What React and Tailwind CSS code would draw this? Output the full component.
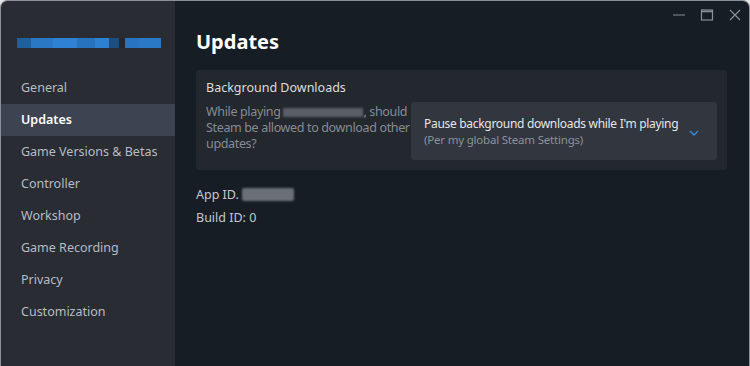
import React from 'react';

const navItems = [
  'General',
  'Updates',
  'Game Versions & Betas',
  'Controller',
  'Workshop',
  'Game Recording',
  'Privacy',
  'Customization',
];

function WindowControls() {
  return (
    <div className="flex items-center gap-[12px] text-[#8b9096]">
      <svg width="16" height="16" viewBox="0 0 16 16">
        <line x1="2" y1="8" x2="14" y2="8" stroke="currentColor" strokeWidth="1.2" />
      </svg>
      <svg width="16" height="16" viewBox="0 0 16 16">
        <rect x="2.5" y="3" width="11" height="10" fill="none" stroke="currentColor" strokeWidth="1.2" />
        <line x1="2.5" y1="4.5" x2="13.5" y2="4.5" stroke="currentColor" strokeWidth="1.5" />
      </svg>
      <svg width="16" height="16" viewBox="0 0 16 16">
        <path d="M3 3 L13 13 M13 3 L3 13" stroke="currentColor" strokeWidth="1.2" />
      </svg>
    </div>
  );
}

function BlurredLogo() {
  // game logo, pixelated / blurred in the screenshot
  return (
    <div className="flex h-[10px] w-[144px] blur-[0.6px]">
      <div className="w-[14px] bg-[#1f5f9c]" />
      <div className="w-[22px] bg-[#2a78c4]" />
      <div className="w-[24px] bg-[#2f82d3]" />
      <div className="w-[18px] bg-[#2873bd]" />
      <div className="w-[14px] bg-[#2e80d0]" />
      <div className="w-[10px] bg-[#1d4e80]" />
      <div className="w-[6px] bg-[#23272e]" />
      <div className="w-[14px] bg-[#2874c0]" />
      <div className="w-[22px] bg-[#2a79c6]" />
    </div>
  );
}

export default function App() {
  return (
    <div
      className="h-[366px] w-[750px] overflow-hidden bg-[#e6e6e6]"
      style={{ fontFamily: '"Noto Sans", "Open Sans", Arial, sans-serif' }}
    >
      <div className="flex h-[367px] overflow-hidden rounded-t-[7px] border border-[#8c9098]">
        {/* Sidebar */}
        <div className="flex w-[174px] shrink-0 flex-col bg-[#292c33]">
          <div className="pl-[16px] pt-[37px]">
            <BlurredLogo />
          </div>
          <nav className="mt-[24px] flex flex-col">
            {navItems.map(item => (
              <div
                key={item}
                className={`flex h-[32px] items-center pl-[20px] text-[12.5px] ${
                  item === 'Updates'
                    ? 'bg-[#3d4350] font-semibold text-white'
                    : 'text-[#b8bcc2]'
                }`}
              >
                {item}
              </div>
            ))}
          </nav>
        </div>

        {/* Main */}
        <div className="flex min-w-0 flex-1 flex-col bg-[#171d25]">
          <div className="flex justify-end pr-[6px] pt-[6px]">
            <WindowControls />
          </div>
          <div className="pl-[21px] pr-[22px]">
            <h1 className="mt-[5px] text-[20px] font-bold leading-[28px] text-white">Updates</h1>

            <div className="mt-[14px] rounded-[3px] bg-[#23272e] px-[10px] pb-[10px] pt-[9px]">
              <div className="text-[12.5px] leading-[18px] text-[#dcdedf]">Background Downloads</div>
              <div className="mt-[5px] flex items-start">
                <p className="mt-[2px] w-[205px] shrink-0 text-[12.5px] leading-[16px] tracking-[-0.35px] text-[#868c94]">
                  While playing{' '}
                  <span className="inline-block h-[9px] w-[80px] bg-[#5a5f66] align-middle blur-[1px]" />
                  , should Steam be allowed to download other updates?
                </p>
                <div className="flex h-[58px] min-w-0 flex-1 items-center justify-between rounded-[3px] bg-[#32363e] pl-[13px] pr-[18px]">
                  <div className="flex flex-col">
                    <span className="whitespace-nowrap text-[12px] leading-[16px] tracking-[-0.3px] text-[#e4e6e8]">
                      Pause background downloads while I'm playing
                    </span>
                    <span className="whitespace-nowrap text-[11.5px] leading-[15px] tracking-[-0.2px] text-[#8b929a]">
                      (Per my global Steam Settings)
                    </span>
                  </div>
                  <svg width="10" height="8" viewBox="0 0 10 8" className="mt-[4px] shrink-0 text-[#2d8fdc]">
                    <path d="M1 2 L5 6 L9 2" fill="none" stroke="currentColor" strokeWidth="1.4" />
                  </svg>
                </div>
              </div>
            </div>

            <div className="mt-[13px] flex items-center text-[12.5px] leading-[23px] text-[#c4c8cd]">
              App ID.
              <span className="ml-[3px] inline-block h-[13px] w-[52px] rounded-[2px] bg-[#6b7078] blur-[1px]" />
            </div>
            <div className="text-[12.5px] leading-[23px] text-[#c4c8cd]">Build ID: 0</div>
          </div>
        </div>
      </div>
    </div>
  );
}
